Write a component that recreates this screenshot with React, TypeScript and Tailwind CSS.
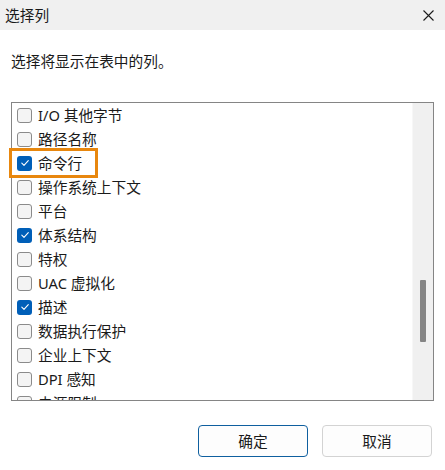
import React from 'react';

const items: { label: string; checked: boolean }[] = [
  { label: 'I/O 其他字节', checked: false },
  { label: '路径名称', checked: false },
  { label: '命令行', checked: true },
  { label: '操作系统上下文', checked: false },
  { label: '平台', checked: false },
  { label: '体系结构', checked: true },
  { label: '特权', checked: false },
  { label: 'UAC 虚拟化', checked: false },
  { label: '描述', checked: true },
  { label: '数据执行保护', checked: false },
  { label: '企业上下文', checked: false },
  { label: 'DPI 感知', checked: false },
  { label: '电源限制', checked: false },
];

const CheckBox = ({ checked }: { checked: boolean }) =>
  checked ? (
    <div className="w-[15px] h-[15px] rounded-[3px] bg-[#005fb8] flex items-center justify-center shrink-0">
      <svg width="10" height="10" viewBox="0 0 10 10" fill="none">
        <path d="M1.8 5.2 L4 7.3 L8.3 2.6" stroke="white" strokeWidth="1.1" strokeLinecap="round" strokeLinejoin="round" />
      </svg>
    </div>
  ) : (
    <div className="w-[15px] h-[15px] rounded-[3px] border border-[#8b8b8b] bg-[#f4f4f4] shrink-0" />
  );

export default function App() {
  return (
    <div
      className="relative w-[445px] h-[470px] bg-white text-[#1a1a1a] overflow-hidden"
      style={{ fontFamily: '"Noto Sans", "Noto Sans CJK SC", sans-serif' }}
    >
      {/* title bar */}
      <div className="h-[30px] bg-[#f0f0f0] flex items-center justify-between pl-[5px] pr-[11px]">
        <span className="text-[14.7px] leading-none">选择列</span>
        <svg width="11" height="11" viewBox="0 0 11 11" fill="none">
          <path d="M0.5 0.5 L10.5 10.5 M10.5 0.5 L0.5 10.5" stroke="#1a1a1a" strokeWidth="1.1" />
        </svg>
      </div>

      <div className="pt-[20px] pl-[11px] text-[14.7px] leading-[22px]">选择将显示在表中的列。</div>

      {/* list */}
      <div className="mt-[30px] mx-[11px] h-[299px] border border-[#858585] flex">
        <div className="flex-1 overflow-hidden pl-[5px]">
          {items.map((it) => (
            <div key={it.label} className="h-[24px] flex items-center gap-[6px] text-[14.7px] whitespace-nowrap">
              <CheckBox checked={it.checked} />
              <span>{it.label}</span>
            </div>
          ))}
        </div>
        <div className="w-[21px] bg-[#f0f0f0] border-l border-[#f7f7f7]">
          <div className="mt-[177px] ml-[7px] w-[6px] h-[62px] bg-[#858585] rounded-[1px]" />
        </div>
      </div>

      {/* buttons */}
      <div className="mt-[24px] flex justify-end gap-[14px] pr-[13px]">
        <button className="w-[110px] h-[32px] rounded-[4px] border border-[#0f5f9f] bg-[#fdfdfd] text-[14.7px]">确定</button>
        <button className="w-[110px] h-[32px] rounded-[4px] border border-[#d3d3d3] bg-[#fdfdfd] text-[14.7px]">取消</button>
      </div>

      {/* orange annotation */}
      <div className="absolute left-[9px] top-[148px] w-[89px] h-[30px] border-[3px] border-[#e8870e]" />
    </div>
  );
}
